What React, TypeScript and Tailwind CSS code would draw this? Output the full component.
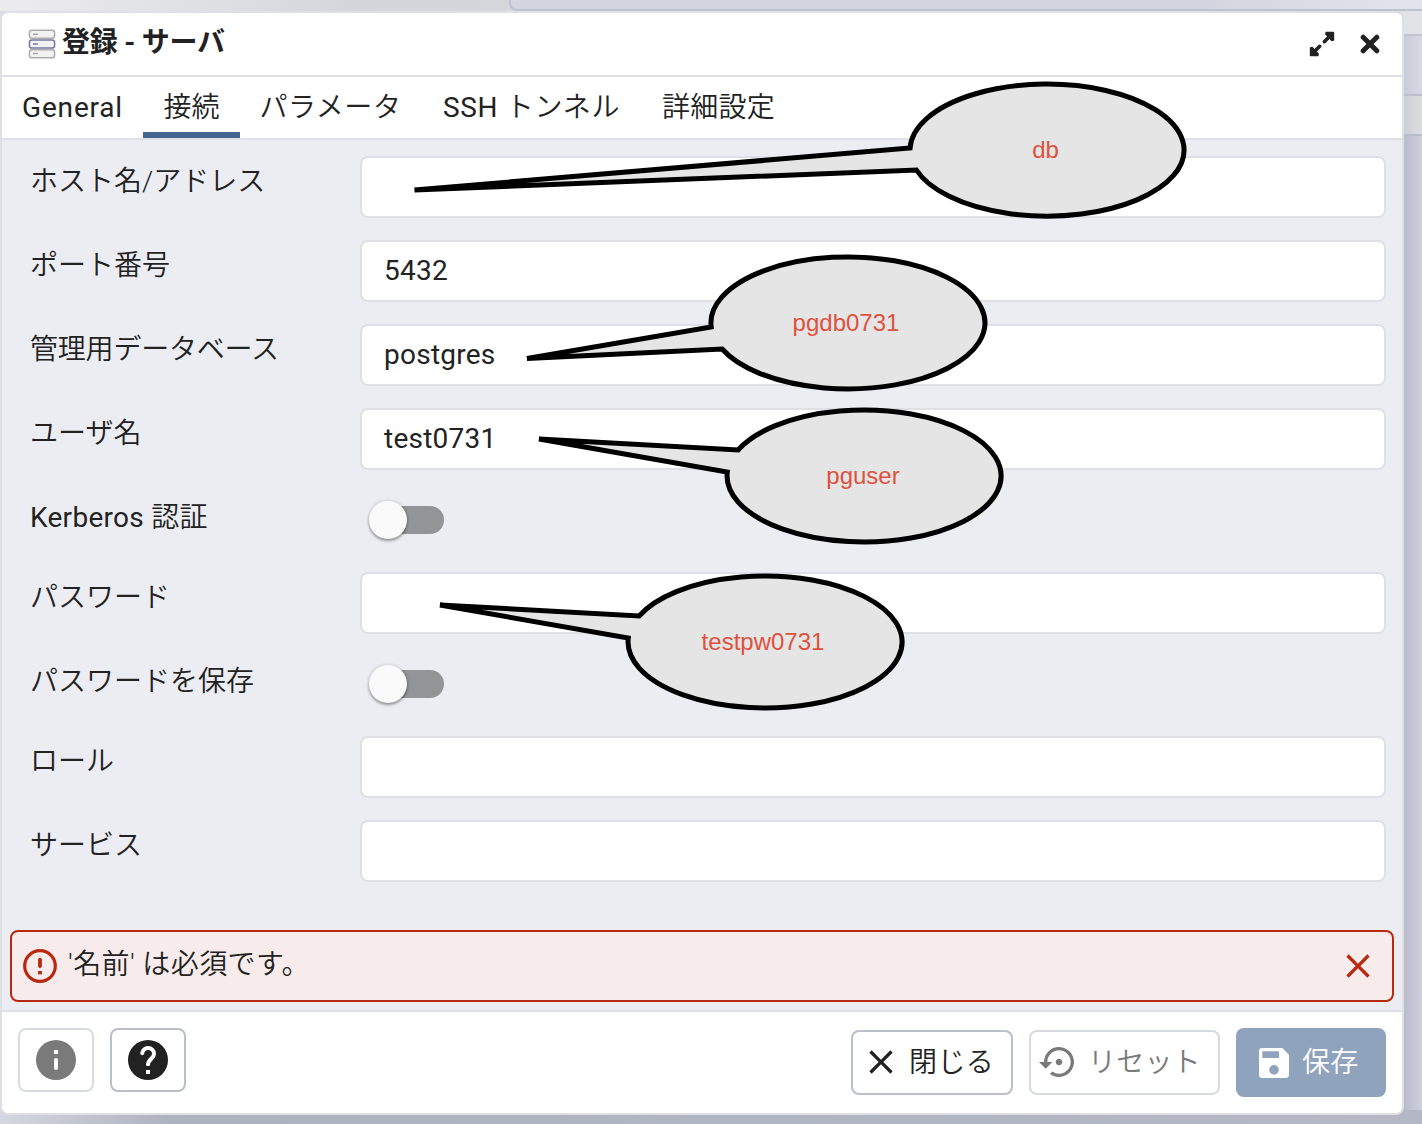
import React from "react";
import { MdSettingsBackupRestore, MdClose } from "react-icons/md";

const FONT = "font-['Roboto','Noto_Sans_CJK_JP',sans-serif]";

function ServerIcon() {
  return (
    <svg width="28" height="30" viewBox="0 0 28 30" fill="#f2f2f2" strokeWidth="1.5">
      <rect x="1.4" y="1.2" width="25.2" height="8" rx="2.6" stroke="#ababab" />
      <rect x="1.4" y="20.8" width="25.2" height="8" rx="2.6" stroke="#ababab" />
      <rect x="1.4" y="11" width="25.2" height="8" rx="2.6" stroke="#7477a3" />
      <path d="M5 5.2h5M5 24.6h5" stroke="#ababab" />
      <path d="M5 14.9h5" stroke="#7477a3" />
    </svg>
  );
}

function ExpandIcon() {
  return (
    <svg className="-mt-[1px] ml-auto size-[26px]" viewBox="0 0 26 26" fill="currentColor" stroke="currentColor" strokeLinejoin="round" strokeLinecap="round">
      <path d="M17.200 1.500H24.500V9L22.800 9.500L16.800 3Z" strokeWidth="1.400" />
      <path d="M8.800 24.500H1.500V17L3.200 16.500L9.200 23Z" strokeWidth="1.400" />
      <path d="M15.300 10.700L20.500 5.500M10.700 15.300L5.500 20.500" strokeWidth="3.600" />
    </svg>
  );
}

function BoldCloseIcon() {
  return (
    <svg className="-mt-[1px] mr-[2px] ml-[25px] size-5" viewBox="0 0 20 20" stroke="currentColor" strokeWidth="5" strokeLinecap="round">
      <path d="M3.200 3.200L16.800 16.800M16.800 3.200L3.200 16.800" />
    </svg>
  );
}

function InfoIcon() {
  return (
    <svg viewBox="0 0 40 40" className="size-10 text-[#7a7a7a]">
      <circle cx="20" cy="20" r="20" fill="currentColor" />
      <rect x="18" y="10" width="4" height="4" fill="#fff" />
      <rect x="18" y="18" width="4" height="12" rx="2" fill="#fff" />
    </svg>
  );
}

function HelpIcon() {
  return (
    <svg viewBox="0 0 40 40" className="size-10">
      <circle cx="20" cy="20" r="20" fill="#222" />
      <path d="M14.200 13.200C14.700 10.200 17 8 20 8c3.400 0 6 2.600 6 6 0 4.400-6 5.300-6 10.800" fill="none" stroke="#fff" strokeWidth="4" strokeLinecap="round" />
      <rect x="17" y="26" width="6" height="4" fill="#222" />
      <rect x="18" y="30" width="4" height="4" fill="#fff" />
    </svg>
  );
}

function ErrorIcon() {
  return (
    <svg viewBox="0 0 40 40" className="size-10 text-[#b9290f]" fill="none" stroke="currentColor">
      <circle cx="20" cy="20" r="15.300" strokeWidth="3.200" />
      <path d="M20 13.700V20" strokeWidth="3.800" strokeLinecap="round" />
      <path d="M20 25V28.400" strokeWidth="3.800" />
    </svg>
  );
}

function SaveIcon() {
  return (
    <svg viewBox="0 0 24 24" fill="currentColor" className="size-10">
      <path fillRule="evenodd" d="M17 3H4.800C3.800 3 3 3.800 3 4.800v14.400c0 1 .8 1.800 1.800 1.800h14.400c1 0 1.800-.8 1.800-1.800V7zM12 19a2.900 2.900 0 1 1 0-5.800 2.900 2.900 0 0 1 0 5.800zM5 5h10v4H5z" />
    </svg>
  );
}

function Tab({ latin, label, width, spacing, active }: { latin?: string; label?: string; width: string; spacing: string; active?: boolean }) {
  return (
    <div className={`flex h-[61px] shrink-0 flex-col items-center ${width}`}>
      <span className={`mt-[10px] whitespace-pre text-[28px] leading-[42px] ${spacing}`}>
        {latin}
        <span className="font-[350]">{label}</span>
      </span>
      {active && <span className="mt-auto h-[6px] w-full bg-[#44668f]" />}
    </div>
  );
}

function Label({ latin, label, spacing }: { latin?: string; label: string; spacing?: string }) {
  return (
    <label className={`mt-[5px] w-[330px] shrink-0 whitespace-pre text-[28px] leading-[42px] ${spacing ?? ""}`}>
      {latin}
      <span className="font-[350]">{label}</span>
    </label>
  );
}

function Field({ label, spacing, value }: { label: string; spacing?: string; value?: string }) {
  return (
    <div className="flex h-[84px] items-start">
      <Label label={label} spacing={spacing} />
      <div className="flex h-[62px] w-[1026px] items-center rounded-lg border-2 border-[#dee0e6] bg-white px-[22px] text-[28px] tracking-[0.25px]">
        {value}
      </div>
    </div>
  );
}

function SwitchField({ latin, label, spacing }: { latin?: string; label: string; spacing?: string }) {
  return (
    <div className="flex h-[80px] items-start">
      <Label latin={latin} label={label} spacing={spacing} />
      <div className="mt-[14px] ml-[16px] h-7 w-[68px] rounded-full bg-[#939498]">
        <div className="-mt-[5px] -ml-[7px] size-[38px] rounded-full bg-[#fafafa] shadow-[0_2px_3px_rgba(0,0,0,0.35),0_0_2px_2px_rgba(0,0,0,0.06)]" />
      </div>
    </div>
  );
}

function Callout({ d, x, y, text }: { d: string; x: number; y: number; text: string }) {
  return (
    <g>
      <path d={d} fill="#e5e5e5" stroke="#000" strokeWidth="5" />
      <text x={x} y={y} textAnchor="middle" fill="#e0513d" className="font-['Liberation_Sans',sans-serif] text-[24px]">
        {text}
      </text>
    </g>
  );
}

export default function App() {
  return (
    <div className={`relative h-[1124px] w-[1422px] overflow-hidden bg-[#d9dce5] text-[#222] ${FONT}`}>
      <div className="absolute inset-x-0 top-0 h-[11px] bg-linear-to-r from-[#ececef] via-[#d5d6dc] via-25% to-[#d9dbe2]" />
      <div className="absolute -top-2 left-[509px] h-[19px] w-[930px] rounded-bl-lg border-2 border-[#bfc2cf] bg-linear-to-r from-[#d3d6e0] via-[#d3d6e0] via-75% to-[#e4e6ec]" />
      <div className="absolute top-[11px] right-0 flex h-[1113px] w-[22px] flex-col">
        <div className="h-[25px] border-b-2 border-[#c2c5d1] bg-[#e2e3e7]" />
        <div className="h-[60px] border-b-2 border-[#bbbfcd] bg-linear-to-r from-[#c6cad6] to-[#d6d9e3]" />
        <div className="h-[40px] border-b-2 border-[#b9bdcb] bg-linear-to-r from-[#cccdd4] to-[#dcdde1]" />
        <div className="flex-1 bg-linear-to-r from-[#b5b9c8] to-[#ced1dc]" />
      </div>
      <div className="absolute inset-x-0 bottom-0 h-[14px] bg-linear-to-r from-[#d4d7df] via-[#adb2bf] via-12% to-[#b4b8c5]" />

      <main className="relative mt-[11px] flex h-[1104px] w-[1404px] flex-col overflow-hidden rounded-lg border-2 border-[#dee0e6] bg-white">
        <header className="flex h-[64px] shrink-0 items-center border-b-2 border-[#dee0e6] pr-[20px] pl-[26px]">
          <ServerIcon />
          <h1 className="-mt-[3px] ml-[6px] text-[28px] font-bold tracking-[-0.25px]">登録 - サーバ</h1>
          <ExpandIcon />
          <BoldCloseIcon />
        </header>
        <nav className="flex h-[63px] shrink-0 border-b-2 border-[#dee0e6]">
          <Tab latin="General" width="w-[141px]" spacing="tracking-[0.8px]" />
          <Tab label="接続" width="w-[97px]" spacing="" active />
          <Tab label="パラメータ" width="w-[181px]" spacing="tracking-[0.6px]" />
          <Tab latin="SSH " label="トンネル" width="w-[221px]" spacing="tracking-[0.7px]" />
          <Tab label="詳細設定" width="w-[153px]" spacing="tracking-[0.3px]" />
        </nav>
        <section className="flex flex-1 flex-col bg-[#ecedf3] pt-[16px]">
          <div className="flex flex-1 flex-col pl-[28px]">
            <Field label="ホスト名/アドレス" />
            <Field label="ポート番号" value="5432" />
            <Field label="管理用データベース" spacing="tracking-[-0.2px]" value="postgres" />
            <Field label="ユーザ名" value="test0731" />
            <SwitchField latin="Kerberos " label="認証" spacing="tracking-[0.28px]" />
            <Field label="パスワード" />
            <SwitchField label="パスワードを保存" />
            <Field label="ロール" />
            <Field label="サービス" />
          </div>
          <div className="mx-2 mb-2 flex h-[72px] shrink-0 items-center rounded-lg border-2 border-[#b9290f] bg-[#f7eceb] pr-[14px] pl-[8px]">
            <ErrorIcon />
            <span className="-mt-[3px] ml-[8px] text-[28px] font-[350] tracking-[0.4px]">'名前' は必須です。</span>
            <MdClose className="ml-auto size-[40px] text-[#b9290f]" />
          </div>
        </section>
        <footer className="flex h-[103px] shrink-0 items-start border-t-2 border-[#dee0e6] px-[16px] pt-[16px] text-[28px]">
          <button className="flex h-[64px] w-[76px] items-center justify-center rounded-lg border-2 border-[#d8dae2]"><InfoIcon /></button>
          <button className="ml-4 flex h-[64px] w-[76px] items-center justify-center rounded-lg border-2 border-[#bbbecb]"><HelpIcon /></button>
          <button className="mt-[2px] ml-auto flex h-[65px] w-[162px] items-center rounded-lg border-2 border-[#bbbecb] pl-[8px]">
            <MdClose className="-mt-[2px] size-[40px]" />
            <span className="ml-[8px] font-[350] tracking-[0.4px]">閉じる</span>
          </button>
          <button className="mt-[2px] ml-4 flex h-[65px] w-[191px] items-center rounded-lg border-2 border-[#d8dae2] pl-[8px] text-[#7a7a7a]">
            <MdSettingsBackupRestore className="-mt-[2px] size-[40px]" />
            <span className="ml-[9px] font-[350] tracking-[0.2px]">リセット</span>
          </button>
          <button className="ml-4 flex h-[69px] w-[150px] items-center rounded-lg bg-[#8fa3bc] pl-[18px] text-white">
            <SaveIcon />
            <span className="ml-[8px] font-[350] tracking-[0.2px]">保存</span>
          </button>
        </footer>
      </main>

      <svg className="absolute inset-0" width="1422" height="1124" viewBox="0 0 1422 1124">
        <Callout d="M414.500 190L910.100 148A137 66 0 1 1 916.400 170Z" x={1045.500} y={158} text="db" />
        <Callout d="M527 358.500L711.200 327A137 66 0 1 1 722.100 349Z" x={846} y={331} text="pgdb0731" />
        <Callout d="M539 439L738.100 450A137 66 0 1 1 727.300 472Z" x={863} y={484} text="pguser" />
        <Callout d="M440 605L639.100 616A137 66 0 1 1 628.300 638Z" x={763} y={650} text="testpw0731" />
      </svg>
    </div>
  );
}
